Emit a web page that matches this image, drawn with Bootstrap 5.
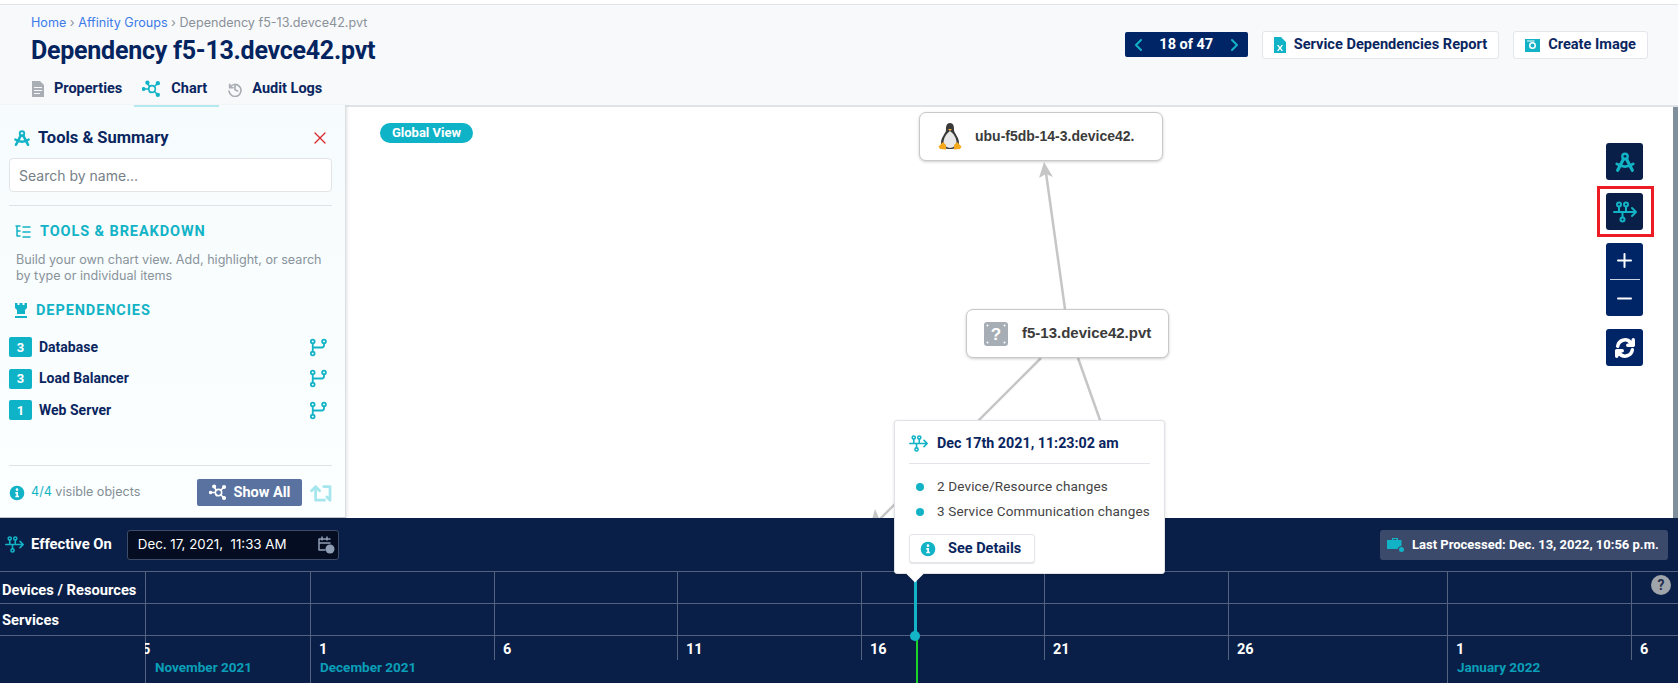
<!DOCTYPE html>
<html>

<head>
  <meta charset="utf-8">
  <meta name="viewport" content="width=device-width">
  <title>Dependency f5-13.devce42.pvt</title>
  <link href="https://cdn.jsdelivr.net/npm/bootstrap@5.3.0/dist/css/bootstrap.min.css" rel="stylesheet" type="text/css" />
  <style>
    body { margin: 0; background: #fff; font-family: "Roboto", "Liberation Sans", sans-serif; overflow: hidden; }
    svg.ico { fill: none; stroke: currentColor; stroke-width: 2; stroke-linecap: round; stroke-linejoin: round; flex-shrink: 0; }
    svg.solid { fill: currentColor; stroke: none; }
    .page-wrap { width: 1678px; height: 683px; padding-top: 4px; }
    .head-fira { font-family: "Roboto", "Liberation Sans", sans-serif; font-weight: 700; }

    .page-head { height: 103px; background: #f8f9fb; border-top: 1px solid #e0e3e8; border-bottom: 2px solid #dfe2e6; padding: 9px 30px 0 31px; }
    .crumbs { font-family: "Inter", sans-serif; font-size: 12.6px; line-height: 18px; color: #8a9199; }
    .crumbs a { color: #3d7be8; text-decoration: none; }
    .page-title { font-size: 25px; line-height: 34px; color: #04245f; margin: 2px 0 0; letter-spacing: -.25px; }
    .tab-row { margin-top: 11px; gap: 20px; }
    .tab-item { font-size: 14.5px; line-height: 20px; color: #0a2660; gap: 9px; }
    .tab-item svg { color: #a9aeb4; }
    .tab-item.on svg { color: #12b3c6; }
    .right-tools { padding-top: 17px; gap: 14px; }
    .pager { width: 123px; height: 25px; background: #002566; color: #fff; border-radius: 2px; font-size: 14.5px; padding: 0 9px; margin-top: 1px; }
    .pager svg { color: #12b3c6; }
    .white-btn { height: 28px; background: #fff; border: 1px solid #e3e6ea; border-radius: 3px; color: #0a2660; font-size: 14.6px; font-weight: 700; padding: 0 11px; gap: 8px; }
    .white-btn svg { color: #12b3c6; }

    .main-area { height: 411px; }
    .side-panel { width: 346px; height: 413px; margin-top: -2px; background: linear-gradient(#f6fbfd, #fbffff); border-right: 1px solid #dcdfe2; border-bottom: 1px solid #bfc3c7; box-shadow: 1px 1px 3px rgba(0, 0, 0, .12); padding: 0 13px 0 9px; flex-shrink: 0; }
    .tab-mark { position: absolute; left: 134px; top: 0; width: 85px; height: 2px; background: #b5e8ee; }
    .panel-title { font-size: 16.5px; color: #0a2660; height: 53px; padding: 13px 0 0 4px; gap: 7px; }
    .panel-title .tool-ico { color: #12b3c6; }
    .panel-title .close-x { color: #d8262c; margin-right: 6px; }
    .side-panel .form-control { height: 34px; font-size: 14px; border-radius: 4px; border-color: #e2e5e8; padding: 0 9px; font-family: "Inter", sans-serif; }
    .side-panel .form-control::placeholder { color: #767f87; }
    .panel-rule { border-top: 1px solid #dfe3e5; margin: 13px 0 0; opacity: 1; }
    .sect-head { font-size: 14.5px; letter-spacing: .9px; color: #12b3c6; text-transform: uppercase; gap: 9px; margin-left: 6px; }
    .sect-text { font-family: "Inter", sans-serif; font-size: 12.6px; line-height: 16px; color: #89939b; margin: 9px 0 0 7px; }
    .dep-row { height: 31.5px; font-size: 14px; color: #0a2660; font-weight: 700; gap: 7px; }
    .dep-row svg { color: #12b3c6; margin-right: 5px; }
    .dep-num { width: 23px; height: 20px; background: #0fb3c7; color: #fff; border-radius: 2px; font-size: 13px; }
    .panel-foot { font-family: "Inter", sans-serif; font-size: 12.6px; color: #838e96; gap: 6px; }
    .panel-foot b { font-weight: 400; color: #12b3c6; }
    .show-btn { width: 105px; height: 27px; background: #5a72a0; color: #fff; border-radius: 2px; font-size: 14.5px; font-weight: 700; gap: 6px; font-family: "Roboto", sans-serif; margin-right: 2px; }

    .chart-area { overflow: hidden; }
    .chart-lines { position: absolute; left: 0; top: 0; width: 1333px; height: 411px; }
    .scope-pill { position: absolute; left: 34px; top: 16px; height: 20px; width: 93px; border-radius: 10px; background: #0fb3c7; color: #fff; font-size: 13px; font-weight: 700; }
    .graph-node { position: absolute; height: 49px; background: #fff; border: 1px solid #c9c9c9; border-radius: 7px; box-shadow: 0 1px 3px rgba(0, 0, 0, .2); font-family: "Liberation Sans", sans-serif; font-size: 14px; font-weight: 700; color: #3b3b3b; }
    .node-a { left: 573px; top: 5px; width: 244px; padding-left: 18px; gap: 13px; }
    .node-b { left: 620px; top: 202px; width: 203px; padding-left: 17px; gap: 14px; font-size: 15px; }
    .tool-stack { position: absolute; left: 1260px; top: 36px; width: 37px; gap: 13px; }
    .tool-btn { width: 37px; height: 37px; border-radius: 3px; background: #0a1f47; color: #12b3c6; }
    .tool-blue { background: #002566; color: #fff; }
    .tool-zoom { height: 73px; gap: 11px; }
    .zoom-line { width: 30px; border-top: 1px solid #c9d2e2; }
    .red-frame { position: absolute; left: 1251px; top: 79px; width: 57px; height: 51px; border: 3px solid #ed1c24; }
    .fake-scroll { position: absolute; right: 0; top: 0; width: 5px; height: 411px; background: #7f8f9b; }

    .time-area { height: 165px; background: #0a1f47; color: #fff; }
    .time-top { height: 53px; padding: 0 10px 0 5px; }
    .eff-label { font-size: 14.8px; font-weight: 700; gap: 7px; }
    .eff-label svg { color: #12b3c6; }
    .date-box { width: 212px; height: 30px; margin-left: 15px; background: #040d22; border: 1px solid #3f4c68; border-radius: 3px; font-family: "Inter", sans-serif; font-size: 13.3px; padding: 0 3px 0 10px; }
    .date-box svg { color: #8f9db5; }
    .last-box { width: 288px; height: 30px; background: #3b4a6b; border-radius: 3px; font-size: 13px; font-weight: 700; padding-left: 7px; gap: 7px; }
    .last-box svg { color: #12b3c6; }
    .time-row { display: grid; grid-template-columns: 145px 165px 184px 183px 184px 183px 184px 219px 184px 47px; border-top: 1px solid #55627f; }
    .time-cell { height: 31px; font-size: 14.7px; font-weight: 700; line-height: 33px; padding-left: 2px; white-space: nowrap; }
    .time-row:first-child .time-cell { line-height: 37px; }
    .time-cell + .time-cell { border-left: 1px solid #55627f; }
    .tick-cell { height: 47px; overflow: hidden; font-size: 14.5px; font-weight: 700; }
    .tick-num { height: 24px; line-height: 28px; padding-left: 8px; border-left: 1px solid #55627f; }
    .tick-first { text-indent: -12px; }
    .tick-month { height: 23px; line-height: 15px; padding-left: 9px; color: #0a9fb8; font-size: 13.5px; white-space: nowrap; }
    .tick-major .tick-month { border-left: 1px solid #55627f; }
    .help-dot { position: absolute; left: 1651px; top: 57px; width: 20px; height: 20px; border-radius: 50%; background: #a0a4ab; color: #22304e; font-size: 14px; font-weight: 700; }
    .mark-line { position: absolute; left: 914px; top: 56px; width: 3px; height: 62px; background: #14b4c8; }
    .mark-green { position: absolute; left: 916px; top: 118px; width: 2px; height: 47px; background: #19d427; }
    .mark-dot { position: absolute; left: 910px; top: 113px; width: 10px; height: 10px; border-radius: 50%; background: #14b4c8; }

    .tip-box { position: absolute; left: 894px; top: 420px; width: 271px; height: 154px; background: #fff; border: 1px solid #dfe2e6; border-radius: 3px; box-shadow: 0 1px 3px rgba(0, 0, 0, .15); padding: 0 14px; }
    .tip-box::after { content: ""; position: absolute; left: 14px; top: 147px; width: 12px; height: 12px; background: #fff; transform: rotate(45deg); }
    .tip-head { height: 43px; padding-top: 3px; font-size: 14.3px; font-weight: 700; color: #0a2660; border-bottom: 1px solid #e2e5ea; gap: 9px; }
    .tip-head svg { color: #12b3c6; }
    .tip-line { height: 25px; font-size: 13.5px; letter-spacing: .15px; color: #444; gap: 13px; padding-left: 7px; white-space: nowrap; }
    .tip-dot { width: 8px; height: 8px; border-radius: 50%; background: #12b3c6; flex-shrink: 0; }
    .tip-btn { width: 126px; height: 29px; margin-top: 10px; background: #fff; border: 1px solid #e2e5ea; border-radius: 3px; color: #0a2660; font-size: 14.5px; font-weight: 700; padding-left: 10px; gap: 12px; box-shadow: 0 1px 1px rgba(0, 0, 0, .1); }
  </style>
</head>

<body>
  <svg width="0" height="0" class="position-absolute">
    <defs>
      <symbol id="i-flow" viewBox="0 0 24 24">
        <path d="M1 12H23M19 8l4 4-4 4M6 12V6.500M13 12V6.500M9.500 12v5" />
        <circle cx="6" cy="4.500" r="2" /><circle cx="13" cy="4.500" r="2" /><circle cx="9.500" cy="19.500" r="2" />
      </symbol>
      <symbol id="i-chart" viewBox="0 0 24 24">
        <path d="M3 12H8M9 9L7 5.500M15 9L18 6M15 15L18 18M9 15l1 1" />
        <circle cx="12" cy="12" r="4" /><circle cx="2" cy="12" r="1.300" fill="currentColor" /><circle cx="6.500" cy="4.500" r="1.600" fill="currentColor" /><circle cx="19" cy="5" r="1.600" fill="currentColor" /><circle cx="19" cy="19" r="1.600" fill="currentColor" />
      </symbol>
      <symbol id="i-compass" viewBox="0 0 24 24">
        <circle cx="12" cy="6" r="3" stroke-width="2.500" />
        <path d="M10.500 8.500L4 21M13.500 8.500L20 21" stroke-width="3.500" /><path d="M3 14q9 6 18 0" stroke-width="3" />
      </symbol>
      <symbol id="i-branch" viewBox="0 0 24 24">
        <circle cx="5" cy="4" r="2.500" stroke-width="2.400" /><circle cx="20" cy="4" r="2.500" stroke-width="2.400" /><circle cx="5" cy="20" r="2.500" stroke-width="2.400" />
        <path d="M5 6.500V17.500M20 6.500V9q0 3-3 3H5" stroke-width="2.400" />
      </symbol>
      <symbol id="i-info" viewBox="0 0 24 24">
        <path fill-rule="evenodd" d="M12 1a11 11 0 1 0 0 22a11 11 0 1 0 0-22ZM12 5a2 2 0 1 1 0 4a2 2 0 1 1 0-4ZM9.500 10.500h4V16h1.500v2.500H9.500V16H11v-3H9.500Z" />
      </symbol>
      <symbol id="i-repeat" viewBox="0 0 24 20">
        <path d="M6 18V3M1.500 7.500L6 3l4.500 4.500M6 18H16M22 18V3H15M18.500 14.500L22 18" stroke-width="3" />
      </symbol>
    </defs>
  </svg>

  <div class="page-wrap position-relative">
    <header class="page-head d-flex justify-content-between">
      <div>
        <div class="crumbs"><a href="#">Home</a> › <a href="#">Affinity Groups</a> › Dependency f5-13.devce42.pvt</div>
        <h1 class="page-title head-fira">Dependency f5-13.devce42.pvt</h1>
        <div class="tab-row d-flex head-fira">
          <div class="tab-item d-flex align-items-center">
            <svg class="ico solid" width="14" height="16" viewBox="0 0 14 16"><path fill-rule="evenodd" d="M1 0h8l4 4v12H1ZM3 6v1h8V6ZM3 9v1h8V9ZM3 12v1h6v-1Z" /></svg>
            Properties
          </div>
          <div class="tab-item on d-flex align-items-center">
            <svg class="ico" width="20" height="20"><use href="#i-chart" /></svg>
            Chart
          </div>
          <div class="tab-item d-flex align-items-center">
            <svg class="ico" width="16" height="16" viewBox="0 0 24 24"><path d="M4 5v5h5M4 10a9 9 0 1 1-1 5M12 7v6l4 2" stroke-width="2.500" /></svg>
            Audit Logs
          </div>
        </div>
      </div>
      <div class="right-tools d-flex align-items-start head-fira">
        <div class="pager d-flex align-items-center justify-content-between">
          <svg class="ico" width="10" height="14" viewBox="0 0 10 14"><path d="M7 2L2 7l5 5" /></svg>
          18 of 47
          <svg class="ico" width="10" height="14" viewBox="0 0 10 14"><path d="M3 2l5 5-5 5" /></svg>
        </div>
        <button class="white-btn d-flex align-items-center" type="button">
          <svg class="ico solid" width="12" height="16" viewBox="0 0 12 16"><path fill-rule="evenodd" d="M0 0h7l5 5v11H0ZM3 8l2 3-2 3h1.500L6 12l1.500 2H9l-2-3 2-3H7.500L6 10 4.500 8Z" /></svg>
          Service Dependencies Report
        </button>
        <button class="white-btn d-flex align-items-center" type="button">
          <svg class="ico solid" width="15" height="14" viewBox="0 0 15 14"><path fill-rule="evenodd" d="M0 1h15v13H0ZM7.500 4a3.500 3.500 0 1 0 0 7a3.500 3.500 0 1 0 0-7ZM7.500 5.500a2 2 0 1 1 0 4a2 2 0 1 1 0-4ZM2 2.500V3.500H9.500V2.500Z" /></svg>
          Create Image
        </button>
      </div>
    </header>

    <div class="main-area d-flex position-relative">
      <aside class="side-panel position-relative">
        <div class="tab-mark"></div>
        <div class="panel-title head-fira d-flex align-items-center">
          <svg class="ico tool-ico" width="18" height="18"><use href="#i-compass" /></svg>
          <span class="flex-grow-1">Tools &amp; Summary</span>
          <svg class="ico close-x" width="12" height="12" viewBox="0 0 12 12"><path d="M1 1L11 11M11 1L1 11" stroke-width="1.300" /></svg>
        </div>
        <input type="text" class="form-control" placeholder="Search by name...">
        <hr class="panel-rule">
        <div class="sect-head head-fira d-flex align-items-center" style="margin-top:15px">
          <svg class="ico" width="16" height="14" viewBox="0 0 16 14"><path d="M1 1h4M8 2h7M8 7h7M8 12h7M2 1v10h3M2 6h3" stroke-width="1.500" /></svg>
          Tools &amp; Breakdown
        </div>
        <p class="sect-text">Build your own chart view. Add, highlight, or search by type or individual items</p>
        <div class="sect-head head-fira d-flex align-items-center" style="margin-top:16px">
          <svg class="ico solid" width="12" height="15" viewBox="0 0 12 15"><path d="M0 0h2.500v2h2V0h3v2h2V0H12v5L10 7v4H2V7L0 5ZM0 13h12v2H0Z" /></svg>
          Dependencies
        </div>
        <div class="head-fira" style="margin-top:10px">
          <div class="dep-row d-flex align-items-center">
            <span class="dep-num d-flex align-items-center justify-content-center">3</span>
            <span class="flex-grow-1">Database</span>
            <svg class="ico" width="18" height="19"><use href="#i-branch" /></svg>
          </div>
          <div class="dep-row d-flex align-items-center">
            <span class="dep-num d-flex align-items-center justify-content-center">3</span>
            <span class="flex-grow-1">Load Balancer</span>
            <svg class="ico" width="18" height="19"><use href="#i-branch" /></svg>
          </div>
          <div class="dep-row d-flex align-items-center">
            <span class="dep-num d-flex align-items-center justify-content-center">1</span>
            <span class="flex-grow-1">Web Server</span>
            <svg class="ico" width="18" height="19"><use href="#i-branch" /></svg>
          </div>
        </div>
        <hr class="panel-rule" style="margin-top:39px">
        <div class="panel-foot d-flex align-items-center" style="margin-top:13px">
          <svg class="ico solid" width="16" height="16" style="color:#12b3c6"><use href="#i-info" /></svg>
          <span class="flex-grow-1"><b>4/4</b> visible objects</span>
          <div class="show-btn d-flex align-items-center justify-content-center">
            <svg class="ico" width="19" height="19"><use href="#i-chart" /></svg>
            Show All
          </div>
          <svg class="ico" width="22" height="18" style="color:#a5e6ed"><use href="#i-repeat" /></svg>
        </div>
      </aside>

      <section class="chart-area flex-grow-1 position-relative">
        <svg class="chart-lines" viewBox="0 0 1333 411">
          <g stroke="#c6c6c6" stroke-width="2.500" fill="none">
            <path d="M719 202L700 66" />
            <path d="M695 251L532 414" />
            <path d="M732 251L760 330" />
          </g>
          <g fill="#c6c6c6">
            <path d="M698 55L707 70L700 67L693 71Z" />
            <path d="M525 416L529 402L533 411L539 412Z" />
          </g>
        </svg>
        <div class="scope-pill head-fira d-flex align-items-center justify-content-center">Global View</div>
        <div class="graph-node node-a d-flex align-items-center">
          <svg width="24" height="27" viewBox="0 0 24 27">
            <path d="M12 0C8 0 8 4 8 7C8 10 3 14 3 20C3 24 7 26 12 26C17 26 21 24 21 20C21 14 16 10 16 7C16 4 16 0 12 0Z" fill="#3a3a3a" />
            <path d="M12 8C9 10 5.500 15 5.500 19C5.500 22 9 25 12 25C15 25 18.500 22 18.500 19C18.500 15 15 10 12 8Z" fill="#e8e8e8" />
            <path d="M10 6h4l-2 2Z" fill="#f4b63a" />
            <path d="M5 19L0.500 23.500L2 26L8 26.500L8 22ZM19 19L23.500 23.500L22 26L16 26.500L16 22Z" fill="#f6a81c" />
          </svg>
          ubu-f5db-14-3.device42.
        </div>
        <div class="graph-node node-b d-flex align-items-center">
          <svg width="24" height="24" viewBox="0 0 24 24">
            <rect width="24" height="24" rx="3" fill="#a7adb5" />
            <g fill="#fff"><circle cx="3.500" cy="3.500" r="1" /><circle cx="20.500" cy="3.500" r="1" /><circle cx="3.500" cy="20.500" r="1" /><circle cx="20.500" cy="20.500" r="1" /></g>
            <text x="12" y="18" text-anchor="middle" fill="#fff" font-family="Liberation Sans, sans-serif" font-weight="700" font-size="17">?</text>
          </svg>
          f5-13.device42.pvt
        </div>
        <div class="tool-stack d-flex flex-column">
          <div class="tool-btn d-flex align-items-center justify-content-center">
            <svg class="ico" width="22" height="22"><use href="#i-compass" /></svg>
          </div>
          <div class="tool-btn d-flex align-items-center justify-content-center">
            <svg class="ico" width="24" height="24"><use href="#i-flow" /></svg>
          </div>
          <div class="tool-btn tool-blue tool-zoom d-flex flex-column align-items-center justify-content-center">
            <svg class="ico" width="15" height="15" viewBox="0 0 15 15"><path d="M7.500 1V14M1 7.500H14" /></svg>
            <div class="zoom-line"></div>
            <svg class="ico" width="15" height="15" viewBox="0 0 15 15"><path d="M1 7.500H14" /></svg>
          </div>
          <div class="tool-btn tool-blue d-flex align-items-center justify-content-center">
            <svg class="ico" width="22" height="22" viewBox="0 0 24 24"><path d="M4 10a8 8 0 0 1 14-4l3 3M21 3v6h-6M20 14a8 8 0 0 1-14 4l-3-3M3 21v-6h6" stroke-width="3.800" /></svg>
          </div>
        </div>
        <div class="red-frame"></div>
        <div class="fake-scroll"></div>
      </section>
    </div>

    <footer class="time-area position-relative">
      <div class="time-top d-flex align-items-center justify-content-between">
        <div class="d-flex align-items-center">
          <div class="eff-label head-fira d-flex align-items-center">
            <svg class="ico" width="19" height="19"><use href="#i-flow" /></svg>
            Effective On
          </div>
          <div class="date-box d-flex align-items-center justify-content-between">
            Dec. 17, 2021,&nbsp; 11:33 AM
            <svg class="ico" width="18" height="18" viewBox="0 0 18 18"><path d="M13 3H2v11h6M2 7h11M5 1v3M10 1v3" stroke-width="1.500" /><circle cx="13" cy="13" r="4.500" fill="currentColor" stroke="none" /></svg>
          </div>
        </div>
        <div class="last-box head-fira d-flex align-items-center">
          <svg class="ico solid" width="18" height="15" viewBox="0 0 18 15"><path d="M5 3V1h6v2h3.500v6a4 4 0 0 0-3.800 3H0V3ZM6.500 2v1h3V2ZM14.500 10a2.500 2.500 0 1 1 0 5a2.500 2.500 0 1 1 0-5Z" /></svg>
          Last Processed: Dec. 13, 2022, 10:56 p.m.
        </div>
      </div>
      <div id="timeRows" class="head-fira"></div>
      <div class="mark-line"></div>
      <div class="mark-green"></div>
      <div class="mark-dot"></div>
      <div class="help-dot d-flex align-items-center justify-content-center">?</div>
    </footer>

    <div class="tip-box">
      <div class="tip-head head-fira d-flex align-items-center">
        <svg class="ico" width="19" height="19"><use href="#i-flow" /></svg>
        Dec 17th 2021, 11:23:02 am
      </div>
      <div style="padding-top:10px">
        <div class="tip-line d-flex align-items-center"><span class="tip-dot"></span>2 Device/Resource changes</div>
        <div class="tip-line d-flex align-items-center"><span class="tip-dot"></span>3 Service Communication changes</div>
      </div>
      <button class="tip-btn head-fira d-flex align-items-center" type="button">
        <svg class="ico solid" width="16" height="16" style="color:#12b3c6"><use href="#i-info" /></svg>
        See Details
      </button>
    </div>
  </div>

  <script>
    const timeRows = document.querySelector("#timeRows")
    const labels = ["Devices / Resources", "Services"]
    const ticks = [
      { num: "5", month: "November 2021", first: true },
      { num: "1", month: "December 2021" },
      { num: "6" }, { num: "11" }, { num: "16" }, { num: "21" }, { num: "26" },
      { num: "1", month: "January 2022" },
      { num: "6" }
    ]

    for (let i = 0; i < labels.length; i++) {
      const row = document.createElement("div")
      row.className = "time-row"
      for (let c = 0; c < 10; c++) {
        const cell = document.createElement("div")
        cell.className = "time-cell"
        cell.textContent = c === 0 ? labels[i] : ""
        row.appendChild(cell)
      }
      timeRows.appendChild(row)
    }

    const tickRow = document.createElement("div")
    tickRow.className = "time-row"
    tickRow.appendChild(document.createElement("div"))
    for (let i = 0; i < ticks.length; i++) {
      const cell = document.createElement("div")
      cell.className = ticks[i].month ? "tick-cell tick-major" : "tick-cell"
      cell.innerHTML = `<div class="tick-num ${ticks[i].first ? "tick-first" : ""}">${ticks[i].num}</div><div class="tick-month">${ticks[i].month || ""}</div>`
      tickRow.appendChild(cell)
    }
    timeRows.appendChild(tickRow)
  </script>
  <script src="https://cdn.jsdelivr.net/npm/bootstrap@5.3.0/dist/js/bootstrap.bundle.min.js"></script>
</body>

</html>
